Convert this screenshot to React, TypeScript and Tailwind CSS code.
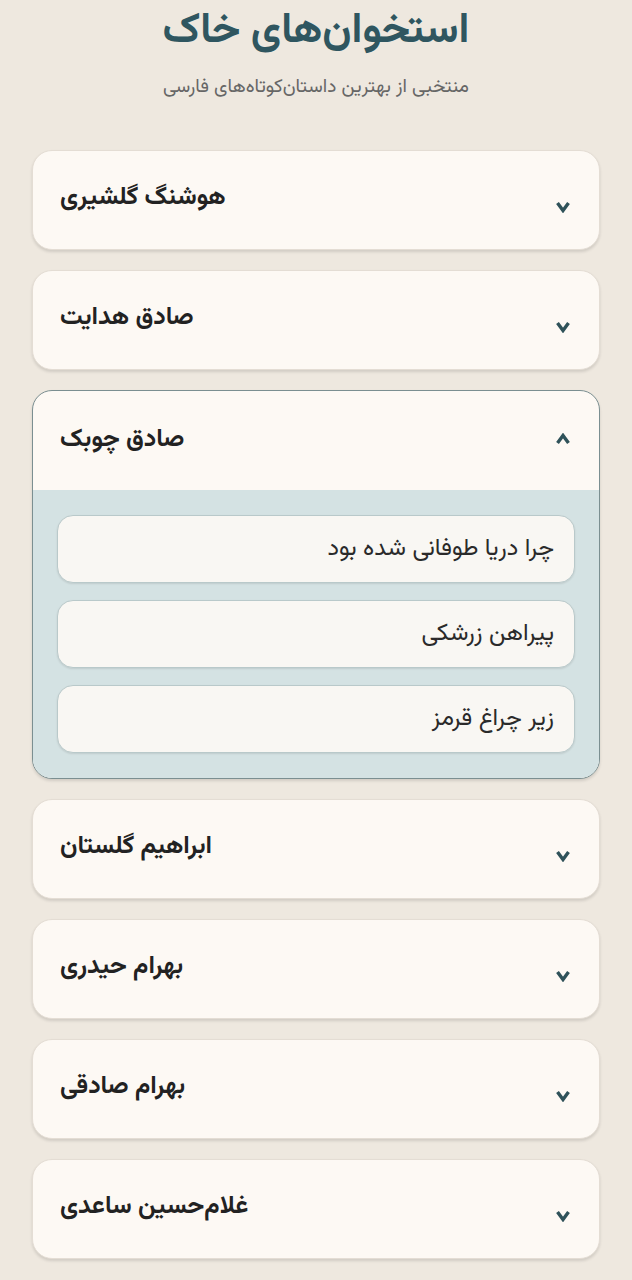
const authors = [
  { name: "هوشنگ گلشیری", stories: [] as string[] },
  { name: "صادق هدایت", stories: [] as string[] },
  { name: "صادق چوبک", stories: ["چرا دریا طوفانی شده بود", "پیراهن زرشکی", "زیر چراغ قرمز"], open: true },
  { name: "ابراهیم گلستان", stories: [] as string[] },
  { name: "بهرام حیدری", stories: [] as string[] },
  { name: "بهرام صادقی", stories: [] as string[] },
  { name: "غلام‌حسین ساعدی", stories: [] as string[] },
];

function Chevron({ up }: { up?: boolean }) {
  return (
    <svg width="16" height="12" viewBox="0 0 16 12" className="text-[#2f5259]">
      {up ? (
        <polyline points="2.5,10 8,2.5 13.5,10" fill="none" stroke="currentColor" strokeWidth="3.4" strokeLinejoin="miter" />
      ) : (
        <polyline points="2.5,2 8,9.5 13.5,2" fill="none" stroke="currentColor" strokeWidth="3.4" strokeLinejoin="miter" />
      )}
    </svg>
  );
}

export default function App() {
  return (
    <div className="min-h-[1280px] bg-[#eee8df] px-8 pb-6 font-['Vazirmatn','Noto_Sans_Arabic','DejaVu_Sans',sans-serif]">
      <header className="flex flex-col items-center pt-[8px]" dir="rtl">
        <h1 className="text-[42px] font-bold leading-[48px] text-[#2f5660]">استخوان‌های خاک</h1>
        <p className="mt-[18px] text-[19px] leading-[28px] text-[#666]">منتخبی از بهترین داستان‌کوتاه‌های فارسی</p>
      </header>

      <div className="mt-[48px] flex flex-col gap-5">
        {authors.map((a) =>
          a.open ? (
            <div key={a.name} className="overflow-hidden rounded-[20px] border border-[#7b8f91] bg-[#fdf9f4] shadow-[0_2px_3px_rgba(0,0,0,0.12)]">
              <div className="flex h-[99px] items-center justify-between pl-[27px] pr-[28px]">
                <span className="-mt-[2px] text-[25px] font-bold text-[#222]">{a.name}</span>
                <span className="-mt-[4px]">
                  <Chevron up />
                </span>
              </div>
              <div className="flex flex-col gap-[17px] bg-[#d4e2e3] px-6 py-[25px]">
                {a.stories.map((s) => (
                  <div
                    key={s}
                    dir="rtl"
                    className="flex h-[68px] items-center rounded-[16px] border border-[#b9c9ca] bg-[#f9f7f3] px-5 text-[24px] text-[#2a2a2a] shadow-[0_1px_2px_rgba(0,0,0,0.1)]"
                  >
                    {s}
                  </div>
                ))}
              </div>
            </div>
          ) : (
            <div
              key={a.name}
              className="flex h-[100px] items-center justify-between rounded-[20px] border border-[#e4ddd4] bg-[#fdf9f4] pl-[27px] pr-[28px] shadow-[0_2px_3px_rgba(0,0,0,0.12)]"
            >
              <span className="-mt-[4px] text-[25px] font-bold text-[#222]">{a.name}</span>
              <span className="mt-[14px]">
                <Chevron />
              </span>
            </div>
          )
        )}
      </div>
    </div>
  );
}
